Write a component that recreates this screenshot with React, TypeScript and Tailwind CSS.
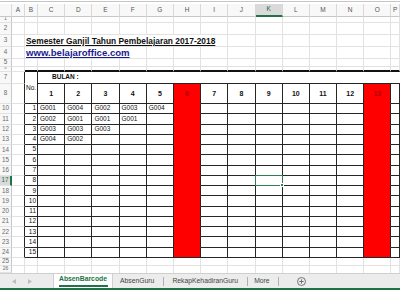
import React from 'react';

type Kind = 'g' | 'r3' | 'r4' | 'r6' | 'r7' | 'r8' | 'd' | 'dl' | 'r26';

const W: string[] = [
  'w-[12px] flex-none',
  'w-[13px] flex-none',
  'w-[13px] flex-none',
  'w-[27.2px] flex-none',
  'w-[27.2px] flex-none',
  'w-[27.2px] flex-none',
  'w-[27.2px] flex-none',
  'w-[27.2px] flex-none',
  'w-[27.2px] flex-none',
  'w-[27.2px] flex-none',
  'w-[27.2px] flex-none',
  'w-[27.2px] flex-none',
  'w-[27.2px] flex-none',
  'w-[27.2px] flex-none',
  'w-[27.2px] flex-none',
  'w-[27.2px] flex-none',
  'flex-1 min-w-0',
];

const LETTERS = ['', 'A', 'B', 'C', 'D', 'E', 'F', 'G', 'H', 'I', 'J', 'K', 'L', 'M', 'N', 'O', 'P'];
const COLS = [1, 2, 3, 4, 5, 6, 7, 8, 9, 10, 11, 12, 13, 14, 15, 16];

const LR = 'border-r border-r-[#e2e2e2]';
const LB = 'border-b border-b-[#e2e2e2]';
const DR = 'border-r border-r-[#262626]';
const DB = 'border-b border-b-[#262626]';
const TB = 'border-b-2 border-b-[#111111]';
const RB = 'border-b border-b-[#ff0000]';

function cellCls(kind: Kind, c: number): string {
  const red = c === 8 || c === 15;
  switch (kind) {
    case 'g':
      return `${LR} ${LB}`;
    case 'r26':
      return LR;
    case 'r3':
      return `${c >= 2 && c <= 8 ? '' : LR} ${LB}`;
    case 'r4':
      return `${c >= 2 && c <= 5 ? '' : LR} ${LB}`;
    case 'r6':
      return `${LR} ${c === 1 ? LB : TB}`;
    case 'r7':
      if (c === 1) return `${DR} ${LB}`;
      if (c === 2) return DR;
      return DB;
    case 'r8':
    case 'd':
      if (c === 1) return `${DR} ${LB}`;
      if (red) return `${DR} ${RB} bg-[#ff0000]`;
      return `${DR} ${DB}`;
    case 'dl':
      if (c === 1) return `${DR} ${LB}`;
      if (red) return `${DR} ${DB} bg-[#ff0000]`;
      return `${DR} ${DB}`;
  }
  return '';
}

const DATA: string[][] = [
  ['G001', 'G004', 'G002', 'G003', 'G004'],
  ['G002', 'G001', 'G001', 'G001'],
  ['G003', 'G003', 'G003'],
  ['G004', 'G002'],
];

type Row = { label: string; h: string; kind: Kind; n?: number; sel?: boolean; lbl?: string };

const ROWS: Row[] = [
  { label: '1', h: 'h-[6px] flex-none', kind: 'g', lbl: 'text-[4.5px]' },
  { label: '2', h: 'h-[12px] flex-none', kind: 'g' },
  { label: '3', h: 'h-[12px] flex-none', kind: 'r3' },
  { label: '4', h: 'h-[12px] flex-none', kind: 'r4' },
  { label: '5', h: 'h-[8px] flex-none', kind: 'g' },
  { label: '6', h: 'h-[5px] flex-none', kind: 'r6', lbl: 'text-[3.6px]' },
  { label: '7', h: 'h-[12px] flex-none', kind: 'r7' },
  { label: '8', h: 'h-[20px] flex-none', kind: 'r8' },
  ...Array.from({ length: 15 }, (_, i) => ({
    label: String(i + 10),
    h: 'h-[10.27px] flex-none',
    kind: (i === 14 ? 'dl' : 'd') as Kind,
    n: i + 1,
    sel: i === 7,
  })),
  { label: '25', h: 'h-[8px] flex-none', kind: 'g' },
  { label: '26', h: 'flex-1 min-h-0', kind: 'r26', lbl: 'text-[5px]' },
];

function content(r: Row, c: number): { node: React.ReactNode; cls: string } {
  if (r.kind === 'r3' && c === 2)
    return {
      node: (
        <span className="text-[8.4px] font-bold underline leading-[10px] text-[#111]">
          Semester Ganjil Tahun Pembelajaran 2017-2018
        </span>
      ),
      cls: 'items-end pl-[1px]',
    };
  if (r.kind === 'r4' && c === 2)
    return {
      node: (
        <span className="text-[9.6px] font-bold underline leading-[11px] text-[#1b1b8e]">
          www.belajaroffice.com
        </span>
      ),
      cls: 'items-end pl-[1px]',
    };
  if (r.kind === 'r7' && c === 3)
    return {
      node: <span className="text-[6.5px] font-bold">BULAN :</span>,
      cls: 'items-center pl-[14px]',
    };
  if (r.kind === 'r8' && c === 2)
    return {
      node: <span className="text-[6.5px] leading-[8px]">No.</span>,
      cls: 'items-start pl-[1px]',
    };
  if (r.kind === 'r8' && c >= 3 && c <= 15) {
    const red = c === 8 || c === 15;
    return {
      node: (
        <span className={`text-[7px] font-bold ${red ? 'text-[#b00000]' : 'text-[#111]'}`}>{c - 2}</span>
      ),
      cls: 'items-center justify-center',
    };
  }
  if ((r.kind === 'd' || r.kind === 'dl') && r.n) {
    if (c === 2)
      return {
        node: <span className="text-[6.5px]">{r.n}</span>,
        cls: 'items-center justify-end pr-[1px]',
      };
    const row = DATA[r.n - 1];
    if (row && c >= 3 && c - 3 < row.length)
      return {
        node: <span className="text-[6.5px]">{row[c - 3]}</span>,
        cls: 'items-center pl-[2px]',
      };
  }
  return { node: null, cls: '' };
}

function SheetRow({ r }: { r: Row }) {
  return (
    <div className={`flex ${r.h}`}>
      <div
        className={`${W[0]} h-full flex items-center justify-center overflow-hidden ${r.lbl ?? 'text-[6.3px]'} leading-none border-b border-b-[#e2e2e2] ${
          r.sel
            ? 'bg-[#dadada] text-[#217346] border-r-2 border-r-[#217346]'
            : 'bg-[#f8f8f8] text-[#6b6b6b] border-r border-r-[#c8c8c8]'
        }`}
      >
        {r.label}
      </div>
      {COLS.map((c) => {
        const ct = content(r, c);
        const isSel = r.sel && c === 11;
        return (
          <div
            key={c}
            className={`${W[c]} h-full flex whitespace-nowrap leading-none text-[#111] ${isSel ? 'relative' : ''} ${cellCls(
              r.kind,
              c
            )} ${ct.cls}`}
          >
            {ct.node}
            {isSel && (
              <div className="absolute -left-px -top-px -right-px -bottom-px border border-[#2f7d52]">
                <div className="absolute -right-[2px] -bottom-[2px] w-[4px] h-[4px] bg-[#2f7d52] border border-white" />
              </div>
            )}
          </div>
        );
      })}
    </div>
  );
}

function HeaderRow() {
  return (
    <div className="flex flex-none h-[13px]">
      {W.map((w, i) => (
        <div
          key={i}
          className={`${w} h-full flex items-center justify-center text-[6.5px] leading-none border-r border-r-[#d9d9d9] ${
            i === 11
              ? 'bg-[#dadada] text-[#1d5e3a] border-b-2 border-b-[#217346]'
              : 'bg-[#f8f8f8] text-[#555] border-b border-b-[#c8c8c8]'
          }`}
        >
          {LETTERS[i]}
        </div>
      ))}
    </div>
  );
}

function TabBar() {
  return (
    <div className="flex-none h-[17px] bg-[#ececec] border-t border-t-[#cfcfcf] border-b-2 border-b-[#217346] flex items-stretch text-[6.8px] leading-none text-[#444]">
      <div className="w-[53px] flex-none flex items-center">
        <svg className="ml-[12px]" width="4" height="5" viewBox="0 0 4 5">
          <path d="M4 0L0 2.5L4 5Z" fill="#bdbdbd" />
        </svg>
        <svg className="ml-[12px]" width="4" height="5" viewBox="0 0 4 5">
          <path d="M0 0L4 2.5L0 5Z" fill="#bdbdbd" />
        </svg>
      </div>
      <div className="w-[60px] flex-none bg-white border-x border-x-[#d0d0d0] flex flex-col items-center justify-end pb-[1px]">
        <span className="font-bold text-[#217346]">AbsenBarcode</span>
        <div className="mt-[2px] h-[2px] w-[49px] bg-[#217346]" />
      </div>
      <div className="flex items-center pl-[7px] pr-[9px]">AbsenGuru</div>
      <div className="w-px h-[9px] self-center bg-[#b0b0b0]" />
      <div className="flex items-center pl-[8px] pr-[9px]">RekapKehadiranGuru</div>
      <div className="w-px h-[9px] self-center bg-[#b0b0b0]" />
      <div className="flex items-center pl-[6px] pr-[8px]">More</div>
      <div className="w-px h-[9px] self-center bg-[#b0b0b0]" />
      <div className="flex items-center pl-[18px]">
        <svg width="9" height="9" viewBox="0 0 9 9">
          <circle cx="4.5" cy="4.5" r="4" fill="none" stroke="#666" strokeWidth="0.9" />
          <path d="M4.5 2.3V6.7M2.3 4.5H6.7" stroke="#666" strokeWidth="0.9" />
        </svg>
      </div>
    </div>
  );
}

export default function App() {
  return (
    <div className="w-[400px] h-[290px] bg-white flex flex-col overflow-hidden font-['Liberation_Sans',Arial,sans-serif]">
      <div className="h-[4px] flex-none">
        <div className="mt-[1px] h-px bg-[#c6c6c6]" />
      </div>
      <HeaderRow />
      {ROWS.map((r, i) => (
        <SheetRow key={i} r={r} />
      ))}
      <TabBar />
    </div>
  );
}
